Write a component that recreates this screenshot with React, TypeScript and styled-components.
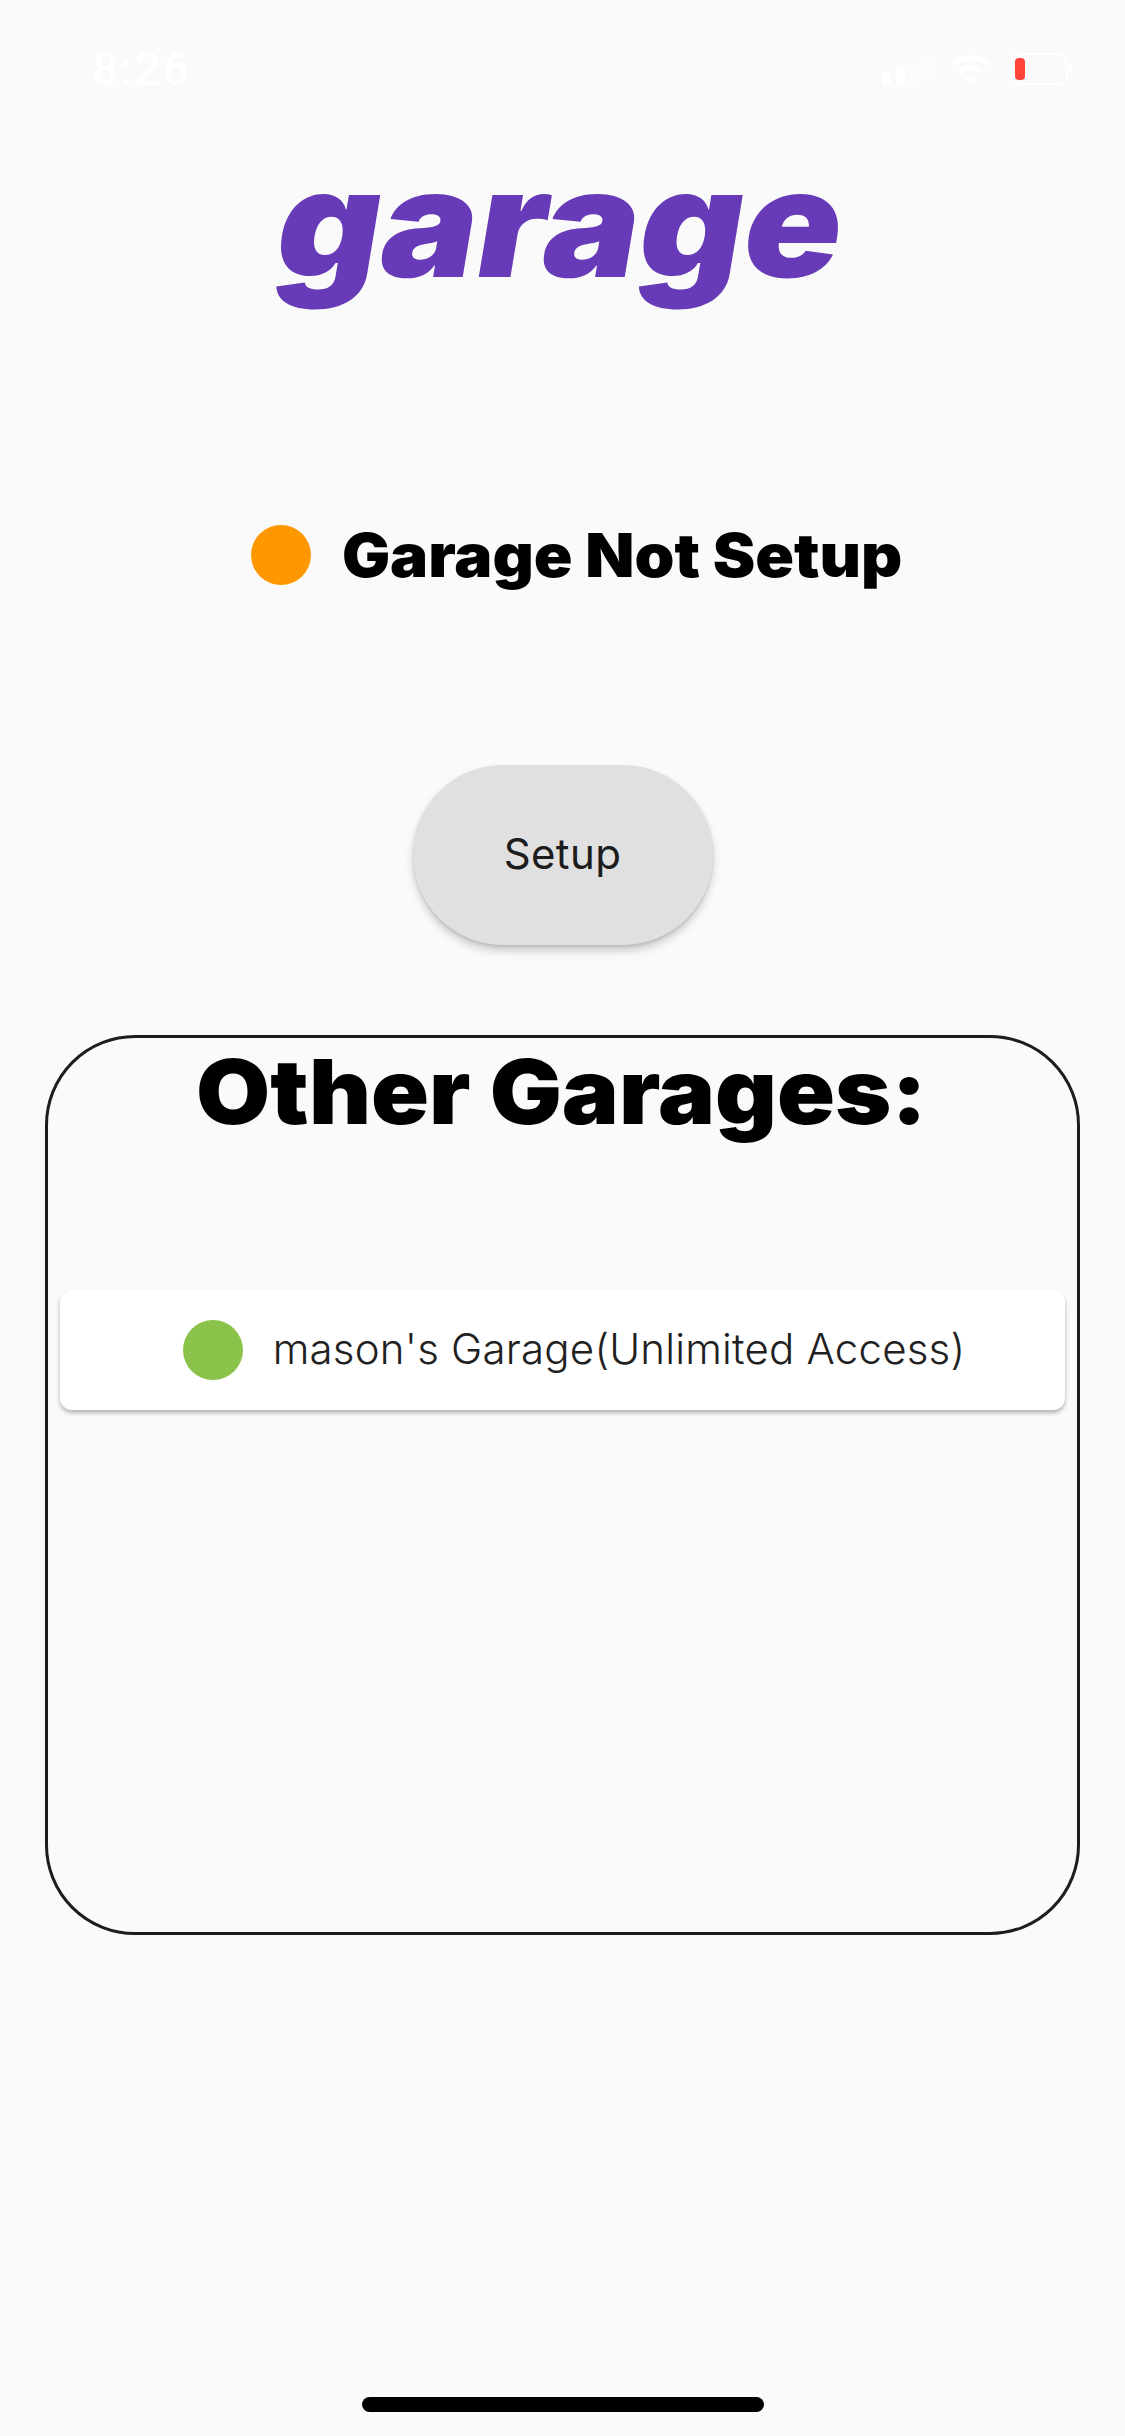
import React from 'react';
import styled, { createGlobalStyle } from 'styled-components';

const GlobalStyle = createGlobalStyle`
  html, body {
    margin: 0;
    padding: 0;
    background: #fafafa;
  }
  body {
    font-family: Inter, "Noto Sans", sans-serif;
  }
`;

const Screen = styled.div`
  width: 1125px;
  height: 2436px;
  display: flex;
  flex-direction: column;
  align-items: center;
  background: #fafafa;
  overflow: hidden;
`;

// --- Status bar ---

const StatusBar = styled.div`
  align-self: stretch;
  height: 132px;
  padding: 46px 52px 0 92px;
  box-sizing: border-box;
  display: flex;
  justify-content: space-between;
  align-items: flex-start;
`;

const Clock = styled.span`
  font-family: Roboto, sans-serif;
  font-size: 47px;
  line-height: 46px;
  font-weight: 500;
  letter-spacing: 1.5px;
  color: #ffffff;
`;

const StatusIcons = styled.div`
  display: flex;
  align-items: flex-start;
  gap: 18px;
  padding-top: 7px;
`;

// --- Header ---

// upright cut slanted by hand, the installed italic has a single-storey "a"
// the installed Inter is also the narrower display cut, so the heavy text gets widened
const Logo = styled.h1`
  margin: 0;
  height: 210px;
  font-size: 150px;
  line-height: 182px;
  font-weight: 900;
  color: #673ab7;
  transform: translateX(-3.5px) skewX(-9.4deg) scaleX(1.075);
`;

const StatusRow = styled.div`
  margin-top: 183px;
  height: 60px;
  padding-left: 11px;
  display: flex;
  align-items: center;
  gap: 48px;
`;

const Dot = styled.span<{ $color: string }>`
  width: 60px;
  height: 60px;
  border-radius: 50%;
  flex: none;
  background: ${props => props.$color};
`;

const StatusText = styled.span`
  font-size: 60px;
  line-height: 58px;
  font-weight: 900;
  color: #000000;
  transform: scaleX(1.065);
`;

const SetupButton = styled.button`
  margin-top: 180px;
  width: 300px;
  height: 180px;
  padding: 0 0 3px;
  border: none;
  border-radius: 90px;
  background: #e0e0e0;
  box-shadow: 0 6px 9px rgba(0, 0, 0, 0.18), 0 2px 3px rgba(0, 0, 0, 0.1);
  font-family: Inter, sans-serif;
  font-size: 42px;
  letter-spacing: 0.4px;
  color: #1c1c1c;
`;

// --- Other garages panel ---

const Panel = styled.section`
  margin-top: 90px;
  width: 1035px;
  height: 900px;
  box-sizing: border-box;
  border: 3px solid #1d1d1d;
  border-radius: 90px;
  padding: 0 12px;
  display: flex;
  flex-direction: column;
`;

const PanelTitle = styled.h2`
  margin: 0;
  height: 252px;
  font-size: 90px;
  line-height: 108px;
  font-weight: 900;
  color: #000000;
  text-align: center;
  transform: translateX(-1px) scaleX(1.063);
`;

const GarageCard = styled.div`
  height: 120px;
  border-radius: 12px;
  background: #ffffff;
  box-shadow: 0 3px 4px rgba(0, 0, 0, 0.28);
  display: flex;
  align-items: center;
  justify-content: center;
  gap: 30px;
  padding-left: 23px;
`;

const GarageName = styled.span`
  font-size: 42px;
  line-height: 56px;
  padding-bottom: 2px;
  font-weight: 350;
  letter-spacing: 0.2px;
  color: #212121;
`;

const HomeIndicator = styled.div`
  margin-top: auto;
  margin-bottom: 24px;
  width: 402px;
  height: 15px;
  border-radius: 8px;
  background: #000000;
`;

// --- Icons ---

function SignalIcon() {
  return (
    <svg width="58" height="32" viewBox="0 0 58 32" fill="#ffffff">
      <rect x="8" y="20" width="9" height="12" rx="2" />
      <rect x="22" y="14" width="9" height="18" rx="2" />
      <rect x="35" y="7" width="9" height="25" rx="2" opacity="0.25" />
      <rect x="49" y="0" width="9" height="32" rx="2" opacity="0.25" />
    </svg>
  );
}

function WifiIcon() {
  return (
    <svg width="42" height="32" viewBox="0 0 42 32" fill="none" stroke="#ffffff" strokeWidth="5.5">
      <path d="M3 11.5C13 2.5 29 2.5 39 11.5" />
      <path d="M10 18.5C16.5 13 25.5 13 32 18.5" />
      <path d="M21 31.5L15 25.5C18.5 22.5 23.5 22.5 27 25.5Z" fill="#ffffff" stroke="none" />
    </svg>
  );
}

function BatteryIcon() {
  return (
    <svg width="63" height="32" viewBox="0 0 63 32" fill="none">
      <rect x="1" y="1" width="56" height="30" rx="8" stroke="#ffffff" strokeWidth="2" />
      <rect x="5" y="5" width="10" height="22" rx="4" fill="#ff453a" />
      <rect x="59" y="11" width="3" height="10" rx="1.5" fill="#ffffff" />
    </svg>
  );
}

export default function App() {
  return (
    <Screen>
      <GlobalStyle />
      <StatusBar>
        <Clock>8:26</Clock>
        <StatusIcons>
          <SignalIcon />
          <WifiIcon />
          <BatteryIcon />
        </StatusIcons>
      </StatusBar>
      <Logo>garage</Logo>
      <StatusRow>
        <Dot $color="#ff9800" />
        <StatusText>Garage Not Setup</StatusText>
      </StatusRow>
      <SetupButton>Setup</SetupButton>
      <Panel>
        <PanelTitle>Other Garages:</PanelTitle>
        <GarageCard>
          <Dot $color="#8bc34a" />
          <GarageName>mason's Garage(Unlimited Access)</GarageName>
        </GarageCard>
      </Panel>
      <HomeIndicator />
    </Screen>
  );
}
